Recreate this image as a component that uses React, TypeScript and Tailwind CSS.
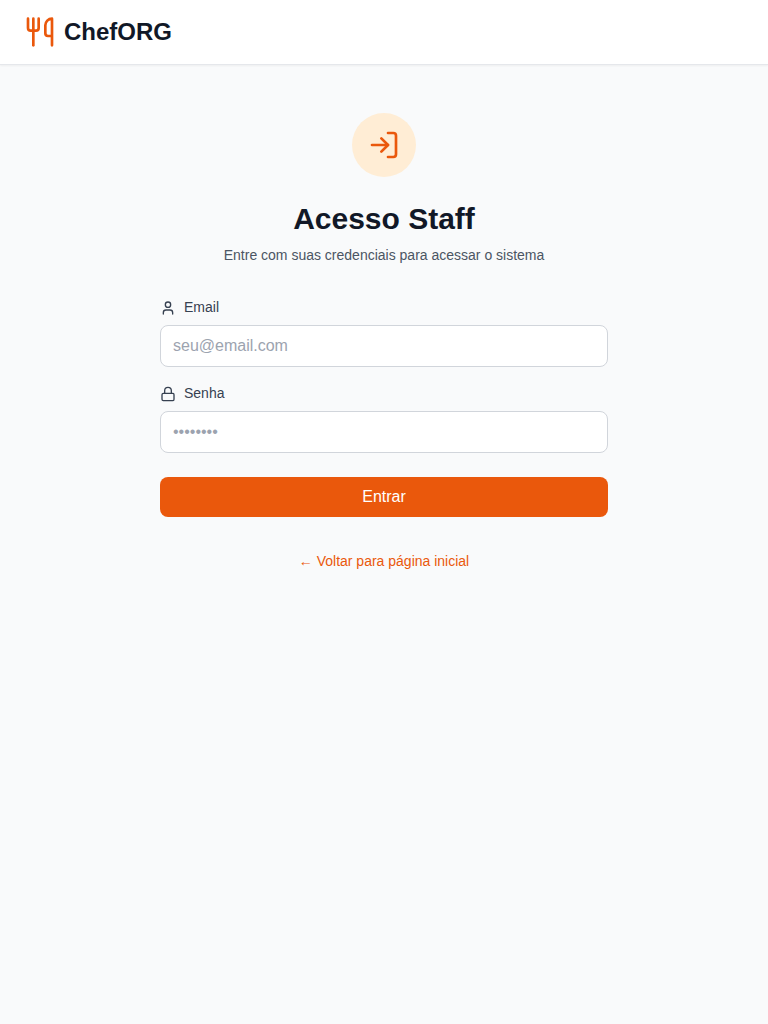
import React from "react";
import { Lock, LogIn, User, Utensils } from "lucide-react";

export default function App() {
  return (
    <div className="min-h-screen bg-[#f9fafb] font-['Liberation_Sans',Arial,sans-serif]">
      <header className="border-b border-[#e5e7eb] bg-white shadow-xs">
        <div className="flex h-16 items-center gap-2 px-6">
          <Utensils className="h-8 w-8 text-[#ea580c]" />
          <span className="text-2xl font-bold text-[#111827]">ChefORG</span>
        </div>
      </header>
      <main className="mx-auto w-[448px] pt-12">
        <div className="mx-auto flex h-16 w-16 items-center justify-center rounded-full bg-[#ffedd5]">
          <LogIn className="h-8 w-8 text-[#ea580c]" />
        </div>
        <h1 className="mt-6 text-center text-3xl font-bold text-[#111827]">Acesso Staff</h1>
        <p className="mt-2 text-center text-sm text-[#4b5563]">
          Entre com suas credenciais para acessar o sistema
        </p>
        <form className="mt-8" onSubmit={(e) => e.preventDefault()}>
          <label htmlFor="email" className="mb-2 flex items-center gap-2 text-sm text-[#374151]">
            <User className="mt-0.5 h-4 w-4" />
            Email
          </label>
          <input
            id="email"
            type="email"
            placeholder="seu@email.com"
            className="block h-[42px] w-full rounded-lg border border-[#d1d5db] bg-white px-3 text-base placeholder:text-[#9ca3af]"
          />
          <label htmlFor="senha" className="mt-4 mb-2 flex items-center gap-2 text-sm text-[#374151]">
            <Lock className="mt-0.5 h-4 w-4" />
            Senha
          </label>
          <input
            id="senha"
            type="password"
            placeholder="••••••••"
            className="block h-[42px] w-full rounded-lg border border-[#d1d5db] bg-white px-3 text-base placeholder:text-[#9ca3af]"
          />
          <button type="submit" className="mt-6 h-10 w-full rounded-lg bg-[#ea580c] text-base text-white">
            Entrar
          </button>
        </form>
        <div className="mt-8 text-center">
          <a href="#" className="text-sm text-[#ea580c]">
            ← Voltar para página inicial
          </a>
        </div>
      </main>
    </div>
  );
}
